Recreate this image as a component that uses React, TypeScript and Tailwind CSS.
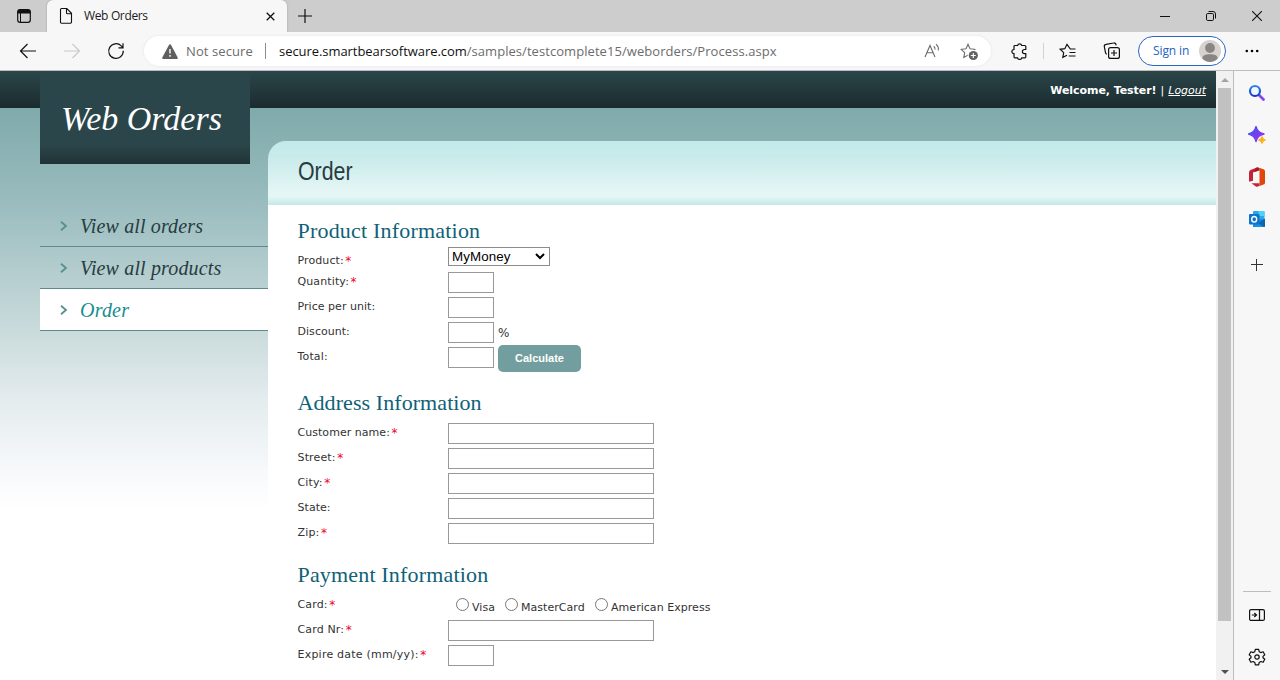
import React from "react";

const UI = "font-['Open_Sans','Noto_Sans',sans-serif]";
const SERIF = "font-['Liberation_Serif',serif]";
const VERDANA = "font-['DejaVu_Sans',sans-serif]";

function TabStrip() {
  return (
    <div className="flex h-8 items-stretch bg-[#cdcdcd]">
      <div className="flex w-[47px] items-center justify-center">
        <svg width="16" height="16" viewBox="0 0 16 16" className="ml-px">
          <rect x="1.7" y="1.7" width="12.6" height="12.6" rx="2.4" fill="none" stroke="#111" strokeWidth="1.2" />
          <path d="M1.5 5.5V4a2.5 2.5 0 0 1 2.5-2.5h8A2.5 2.5 0 0 1 14.500 4v1.500z" fill="#111" />
          <path d="M4.500 5v9" stroke="#111" />
        </svg>
      </div>
      <div className="flex w-[240px] items-center rounded-t-[6px] bg-[#f7f7f7] shadow-[0_0_2px_#999]">
        <svg width="14" height="18" viewBox="0 0 14 18" className="ml-3">
          <path d="M2.600 1.500h5.200l4.700 4.800v8.600a1.400 1.400 0 0 1-1.400 1.400H2.600a1.100 1.100 0 0 1-1.100-1.100V2.600a1.100 1.100 0 0 1 1.100-1.100zM7.500 1.700v4.100a1 1 0 0 0 1 1h3.800" fill="none" stroke="#111" strokeWidth="1.100" />
        </svg>
        <span className={`ml-[11px] text-[12px] leading-4 tracking-[-0.350px] whitespace-nowrap text-[#1b1b1b] ${UI}`}>Web Orders</span>
        <svg width="9" height="9" viewBox="0 0 9 9" className="mr-[12px] ml-auto">
          <path d="M.7.7l7.600 7.600M8.300.7L.7 8.300" stroke="#111" strokeWidth="1.300" />
        </svg>
      </div>
      <div className="flex w-[36px] items-center justify-center">
        <svg width="14" height="14" viewBox="0 0 14 14" className="-mt-px">
          <path d="M7 0v14M0 7h14" stroke="#111" strokeWidth="1.200" />
        </svg>
      </div>
      <div className="ml-auto flex items-center gap-[36px] pr-[18px]">
        <svg width="10" height="10" viewBox="0 0 10 10"><path d="M0 5.500h10" stroke="#111" /></svg>
        <svg width="10" height="10" viewBox="0 0 10 10">
          <rect x=".5" y="2.500" width="7" height="7" rx="1.300" fill="none" stroke="#111" />
          <path d="M2.500.5H7A2.500 2.500 0 0 1 9.500 3v4.500" fill="none" stroke="#111" />
        </svg>
        <svg width="10" height="10" viewBox="0 0 10 10"><path d="M0 0l10 10M10 0L0 10" stroke="#111" strokeWidth="1.100" /></svg>
      </div>
    </div>
  );
}

const STAR = "M8 1.300l2 4.400 4.800.6-3.500 3.300.9 4.800L8 12.100l-4.200 2.300.9-4.800L1.200 6.300 6 5.700z";

function Toolbar() {
  return (
    <div className="flex h-[38px] items-center bg-[#f7f7f7]">
      <svg width="18" height="16" viewBox="0 0 18 16" className="ml-[19px]">
        <path d="M8.500 1L1.500 8l7 7M1.500 8H17" fill="none" stroke="#111" strokeWidth="1.200" />
      </svg>
      <svg width="18" height="16" viewBox="0 0 18 16" className="ml-[26px]">
        <path d="M9.500 1l7 7-7 7M16.500 8H1" fill="none" stroke="#c9c9c9" strokeWidth="1.200" />
      </svg>
      <svg width="18" height="18" viewBox="0 0 18 18" className="ml-[26px]">
        <path d="M16.300 8.800a7.300 7.300 0 1 1-2.100-4.900l1.700 1.700M16 1.300v4.500h-4.500" fill="none" stroke="#111" strokeWidth="1.200" />
      </svg>
      <div className="ml-[19px] flex h-[30px] w-[847px] items-center rounded-full bg-white shadow-[0_0_3px_#e4e4e4]">
        <svg width="16" height="15" viewBox="0 0 16 15" className="ml-[18px]">
          <path d="M7.100.7a1 1 0 0 1 1.800 0l6.800 12.700a1 1 0 0 1-.9 1.500H1.200a1 1 0 0 1-.9-1.500z" fill="#5f5f5f" />
          <path d="M8 5v4.500M8 11v1.700" stroke="#fff" strokeWidth="1.400" />
        </svg>
        <span className={`ml-[8px] w-[68px] text-[13px] leading-5 tracking-[0.100px] whitespace-nowrap text-[#6c6c6c] ${UI}`}>Not secure</span>
        <span className="ml-[11px] h-4 w-px bg-[#8c8c8c]" />
        <span className={`ml-[13px] text-[13px] leading-5 tracking-[0.060px] whitespace-nowrap text-[#6c6c6c] ${UI}`}>
          <span className="tracking-[-0.060px] text-[#111]">secure.smartbearsoftware.com</span>/samples/testcomplete15/weborders/Process.aspx
        </span>
        <svg width="17" height="16" viewBox="0 0 17 16" className="mr-[19px] ml-auto">
          <path d="M1 14L6 2.500 11 14M2.900 9.800h6.200M9.700 3.200q1.700 1.300 1.300 3.500M12 1.300q3 2.400 2.300 6" fill="none" stroke="#6c6c6c" strokeWidth="1.100" />
        </svg>
        <svg width="19" height="18" viewBox="0 0 19 18" className="mr-[12px] mt-px">
          <path d={STAR} fill="none" stroke="#6c6c6c" strokeWidth="1.100" />
          <circle cx="13.300" cy="12.500" r="5.600" fill="#fff" />
          <circle cx="13.300" cy="12.500" r="4.600" fill="#616161" />
          <path d="M13.300 10v5M10.800 12.500h5" stroke="#fff" strokeWidth="1.100" />
        </svg>
      </div>
      <svg width="17" height="17" viewBox="0 0 17 17" className="ml-[20px]">
        <path d="M4 2.500h2.600a2.100 2.100 0 0 1 4.100 0h3.100a1 1 0 0 1 1 1v3h-1.300a2 2 0 0 0 0 4.200h1.300v3.100a1 1 0 0 1-1 1h-3.100a2.100 2.100 0 0 1-4.100 0H4a1 1 0 0 1-1-1v-3.100a2.100 2.100 0 0 1 0-4.200v-3a1 1 0 0 1 1-1z" fill="none" stroke="#111" strokeWidth="1.200" />
      </svg>
      <span className="ml-[15px] h-4 w-px bg-[#d2d2d2]" />
      <svg width="18" height="17" viewBox="0 0 18 17" className="ml-[15px]">
        <path d="M16.500 6h-5.200L8 1.300 5.800 5.700 1.200 6.300l3.500 3.300-.9 4.800L8 12.300M10.500 9.500h6M9.800 13h6.700" fill="none" stroke="#111" strokeWidth="1.200" />
      </svg>
      <svg width="18" height="18" viewBox="0 0 18 18" className="ml-[26px]">
        <rect x="5.600" y="5.600" width="10.800" height="10.800" rx="2" fill="none" stroke="#111" strokeWidth="1.200" />
        <path d="M11 8v6M8 11h6M13 3.300A2 2 0 0 0 10.600 1L3 2.300A2 2 0 0 0 1.300 4.500l1.200 6.200a2 2 0 0 0 1.400 1.600" fill="none" stroke="#111" strokeWidth="1.200" />
      </svg>
      <div className="ml-[17px] flex h-[30px] w-[88px] items-center rounded-full border border-[#2c66c4] bg-white">
        <span className={`ml-[14px] w-[38px] text-[12px] leading-4 tracking-[-0.100px] whitespace-nowrap text-[#2463c4] ${UI}`}>Sign in</span>
        <svg width="22" height="22" viewBox="0 0 22 22" className="ml-[8px]">
          <circle cx="11" cy="11" r="11" fill="#d6d2cf" />
          <circle cx="11" cy="8" r="4.900" fill="#8a8583" />
          <path d="M3.300 18.500c0-3 3-4.200 7.700-4.200s7.700 1.200 7.700 4.200A11 11 0 0 1 11 22a11 11 0 0 1-7.700-3.500z" fill="#8a8583" />
        </svg>
      </div>
      <svg width="14" height="4" viewBox="0 0 14 4" className="ml-[19px]">
        <circle cx="1.800" cy="2" r="1.300" /><circle cx="7" cy="2" r="1.300" /><circle cx="12.200" cy="2" r="1.300" />
      </svg>
    </div>
  );
}

function EdgeSidebar() {
  return (
    <div className="flex w-[47px] flex-col items-center border-l border-[#bdbdbd] bg-[#f7f7f7]">
      <svg width="18" height="18" viewBox="0 0 18 18" className="mt-[13px]">
        <defs>
          <linearGradient id="lens" x1="0" y1="0" x2="0" y2="1"><stop stopColor="#2f86e6" /><stop offset="1" stopColor="#1637c9" /></linearGradient>
          <linearGradient id="spark" x1="0" y1="0" x2="1" y2="1"><stop stopColor="#3b55ee" /><stop offset="1" stopColor="#a22df0" /></linearGradient>
        </defs>
        <path d="M11 11l4.500 4.500" stroke="#8548ef" strokeWidth="2.800" strokeLinecap="round" />
        <circle cx="7" cy="7" r="5" fill="#eef7ff" stroke="url(#lens)" strokeWidth="2.200" />
      </svg>
      <svg width="18" height="18" viewBox="0 0 18 18" className="mt-[24px]">
        <path d="M8 .500Q9.300 6.700 16 8 9.300 9.300 8 15.500 6.700 9.300.500 8 6.700 6.700 8 .500z" fill="url(#spark)" stroke="url(#spark)" strokeWidth="1.400" strokeLinejoin="round" />
        <path d="M14 10.500q.7 2.800 3.500 3.500-2.800.7-3.500 3.500-.7-2.800-3.500-3.500 2.800-.7 3.500-3.500z" fill="#ffb11b" stroke="#ffb11b" />
      </svg>
      <svg width="18" height="20" viewBox="0 0 18 20" className="mt-[23px]">
        <path d="M9.500.3L2.500 3Q1 3.700 1 5.300v8.400q0 1.100 1 .9l3-.9V5.500l4.500-1.700z" fill="#c4243b" />
        <path d="M9.500.3l6 2Q17 2.900 17 4.300v11.400q0 1.400-1.500 1.900l-6 2.100q2-.5 2-2.500V3q0-1.900-2-2.700z" fill="#e1450c" />
        <path d="M9.500.3Q7 .9 6.500 5L11.500 3.500V2.700Q11.200.8 9.500.3z" fill="#a41c20" />
        <path d="M3.500 16.300h8v1q0 2-2 2.400-1 .2-2-.5z" fill="#c4243b" />
      </svg>
      <svg width="18" height="18" viewBox="0 0 18 18" className="mt-[23px]">
        <rect x="5" y="1" width="11.500" height="12" rx="1" fill="#28a8ea" />
        <path d="M10.500 1h5q1 0 1 1v4h-6z" fill="#50d1f5" />
        <path d="M5 9h12v7q0 1-1 1H5z" fill="#1490df" />
        <path d="M17 8.500v7.500q0 1-1 1l-6-4z" fill="#0f62ad" />
        <rect x="1" y="4" width="10.500" height="10.500" rx="1" fill="#0f72cb" />
        <ellipse cx="6.200" cy="9.300" rx="2.500" ry="2.800" fill="none" stroke="#fff" strokeWidth="1.400" />
      </svg>
      <svg width="12" height="12" viewBox="0 0 12 12" className="mt-[31px]">
        <path d="M5.500 0v12M0 5.500h12" stroke="#333" />
      </svg>
      <div className="mt-auto h-px w-[28px] bg-[#bdbdbd]" />
      <svg width="18" height="14" viewBox="0 0 18 14" className="mt-[16px]">
        <rect x="1.600" y="1.600" width="14.800" height="10.800" rx="1.500" fill="none" stroke="#111" strokeWidth="1.200" />
        <path d="M11.500 1.500v11M3.800 7h4.500M6.300 5l2.200 2-2.200 2" fill="none" stroke="#111" strokeWidth="1.200" />
      </svg>
      <svg width="18" height="18" viewBox="0 0 18 18" className="mt-[26px] mb-[14px]">
        <path d="M7.300 1.300h3.400l.5 2.400 1.600.9 2.300-.8 1.700 3-1.800 1.600v1.300l1.800 1.600-1.700 3-2.300-.8-1.600.9-.5 2.400H7.300l-.5-2.400-1.600-.9-2.300.8-1.700-3L3 9.700V8.400L1.200 6.800l1.700-3 2.300.8 1.600-.9z" fill="none" stroke="#111" strokeWidth="1.200" strokeLinejoin="round" />
        <circle cx="9" cy="9" r="2.200" fill="none" stroke="#111" strokeWidth="1.200" />
      </svg>
    </div>
  );
}

function Scrollbar() {
  return (
    <div className="flex w-[17px] flex-col items-center bg-[#f1f1f1]">
      <div className="flex h-[17px] items-center">
        <svg width="8" height="4" viewBox="0 0 8 4"><path d="M0 4l4-4 4 4z" fill="#a3a3a3" /></svg>
      </div>
      <div className="h-[533px] w-[13px] bg-[#c1c1c1]" />
      <div className="mt-auto flex h-[17px] items-center">
        <svg width="8" height="4" viewBox="0 0 8 4"><path d="M0 0h8l-4 4z" fill="#505050" /></svg>
      </div>
    </div>
  );
}

function NavItem({ text, spacing, active }: { text: string; spacing: string; active?: boolean }) {
  return (
    <div className={`flex h-[42px] items-center border-b border-[#5f8a8c] ${active ? "bg-white" : ""}`}>
      <svg width="8" height="10" viewBox="0 0 8 10" className="ml-[20px]">
        <path d="M1 .700L6 5 1 9.300" fill="none" stroke="#568f92" strokeWidth="1.800" />
      </svg>
      <span className={`ml-[12px] text-[20px] leading-6 whitespace-nowrap italic ${SERIF} ${spacing} ${active ? "text-[#178c92]" : "text-[#263c40]"}`}>{text}</span>
    </div>
  );
}

interface RowProps {
  label: string;
  required?: boolean;
  wide?: boolean;
  spacing?: string;
  pad?: string;
  children?: React.ReactNode;
}

function Row({ label, required, wide, spacing = "tracking-[0.040px]", pad = "pt-[5px]", children }: RowProps) {
  return (
    <div className="flex h-[25px] items-start">
      <label className={`flex w-[150px] text-[11px] leading-[14px] whitespace-nowrap text-[#333] ${spacing} ${pad}`}>
        <span className="-ml-[0.5px]">{label}</span>
        {required && <span className="ml-[1.500px] text-[12px] text-[#f00028]">*</span>}
      </label>
      {children ?? <Field wide={wide} />}
    </div>
  );
}

function Field({ wide }: { wide?: boolean }) {
  return <input className={`mt-[2px] h-[21px] border border-[#999] bg-white outline-none ${wide ? "w-[206px]" : "w-[46px]"}`} />;
}

function Heading({ children, className }: { children: string; className: string }) {
  return <h2 className={`-ml-[0.5px] h-6 text-[22px] leading-6 whitespace-nowrap text-[#0f6178] ${SERIF} ${className}`}>{children}</h2>;
}

function Radio({ text, className }: { text: string; className: string }) {
  return (
    <label className={`flex items-start text-[11px] leading-[14px] whitespace-nowrap ${className}`}>
      <span className="mt-[5px] h-[13px] w-[13px] rounded-full border border-[#767676] bg-white" />
      <span className="mt-[8px] ml-[3px] tracking-[0.040px]">{text}</span>
    </label>
  );
}

export default function App() {
  return (
    <div className="flex h-[680px] w-[1280px] flex-col overflow-hidden bg-white">
      <TabStrip />
      <Toolbar />
      <div className="h-px shrink-0 bg-[#bdbdbd]" />
      <div className="flex min-h-0 flex-1">
        <div className={`flex w-[1216px] bg-[linear-gradient(to_bottom,#2b464a_0px,#1b2b2e_37px,#7faaab_37px,#9bbdbf_135px,#cadbdc_260px,#e4ecee_330px,#f7f9fb_400px,#fff_440px)] text-[#333] ${VERDANA}`}>
          <aside className="flex w-[268px] flex-col pl-[40px]">
            <div className="flex h-[93px] w-[210px] items-center bg-[linear-gradient(to_bottom,#2b464a_78%,#203336)] pl-[21px]">
              <span className={`mt-[2px] text-[34px] leading-9 whitespace-nowrap text-white italic ${SERIF}`}>Web Orders</span>
            </div>
            <nav className="mt-[41px] flex flex-col">
              <NavItem text="View all orders" spacing="tracking-[0.130px]" />
              <NavItem text="View all products" spacing="tracking-[0.150px]" />
              <NavItem text="Order" spacing="tracking-[0.200px]" active />
            </nav>
          </aside>
          <main className="flex flex-1 flex-col">
            <div className="flex h-[70px] items-start justify-end pt-[13px] pr-[10px] text-[11px] leading-[14px] text-white">
              <span className="tracking-[-0.050px] font-bold">Welcome, Tester!</span>
              <span className="mx-[4px]">|</span>
              <a className="tracking-[-0.030px] italic underline">Logout</a>
            </div>
            <div className="flex h-[64px] items-center rounded-tl-[18px] bg-[linear-gradient(to_bottom,#c2eae9_0%,#c8ebea_25%,#e6f6f6_82%,#e2f5f5_88%,#c3e9e8_100%)] pl-[30px]">
              <h1 className="-mt-[4px] origin-left scale-x-[0.82] font-['Liberation_Sans',sans-serif] text-[26px] leading-8 text-[#263c40]">Order</h1>
            </div>
            <div className="flex flex-1 flex-col bg-white pt-[14px] pl-[30px]">
              <Heading className="mb-[2px] tracking-[0.200px]">Product Information</Heading>
              <Row label="Product:" required pad="pt-[9px]" spacing="tracking-[0.100px]">
                <div className="mt-[2px] flex h-[19px] w-[102px] items-center justify-between border border-[#8c8c8c] bg-white pr-[4px] pl-[3px] font-['Liberation_Sans',sans-serif] text-[13.330px] leading-4 tracking-[0.100px] text-black">
                  MyMoney
                  <svg width="10" height="7" viewBox="0 0 10 7"><path d="M1 1l4 4 4-4" fill="none" stroke="#000" strokeWidth="2" /></svg>
                </div>
              </Row>
              <Row label="Quantity:" required spacing="tracking-[0.120px]" />
              <Row label="Price per unit:" />
              <Row label="Discount:">
                <Field />
                <span className="mt-[6px] ml-[4px] text-[12px] leading-[14px]">%</span>
              </Row>
              <Row label="Total:" spacing="tracking-[0.150px]">
                <Field />
                <button className="ml-[4px] h-[27px] w-[83px] shrink-0 rounded-[5px] bg-[#739e9f] font-['Liberation_Sans',sans-serif] text-[11px] font-bold text-white">Calculate</button>
              </Row>
              <Heading className="mt-[21px] mb-[6px] tracking-[0.080px]">Address Information</Heading>
              <Row label="Customer name:" required wide />
              <Row label="Street:" required wide spacing="tracking-[0.150px]" />
              <Row label="City:" required wide spacing="tracking-[0.150px]" />
              <Row label="State:" wide />
              <Row label="Zip:" required wide spacing="tracking-[0.150px]" />
              <Heading className="mt-[17px] mb-[6px] tracking-[0.170px]">Payment Information</Heading>
              <Row label="Card:" required spacing="tracking-[0.150px]">
                <Radio text="Visa" className="ml-[8px] w-[49px]" />
                <Radio text="MasterCard" className="w-[90px]" />
                <Radio text="American Express" className="" />
              </Row>
              <Row label="Card Nr:" required wide spacing="tracking-[0.150px]" />
              <Row label="Expire date (mm/yy):" required spacing="tracking-[0.220px]" />
            </div>
          </main>
        </div>
        <Scrollbar />
        <EdgeSidebar />
      </div>
    </div>
  );
}
